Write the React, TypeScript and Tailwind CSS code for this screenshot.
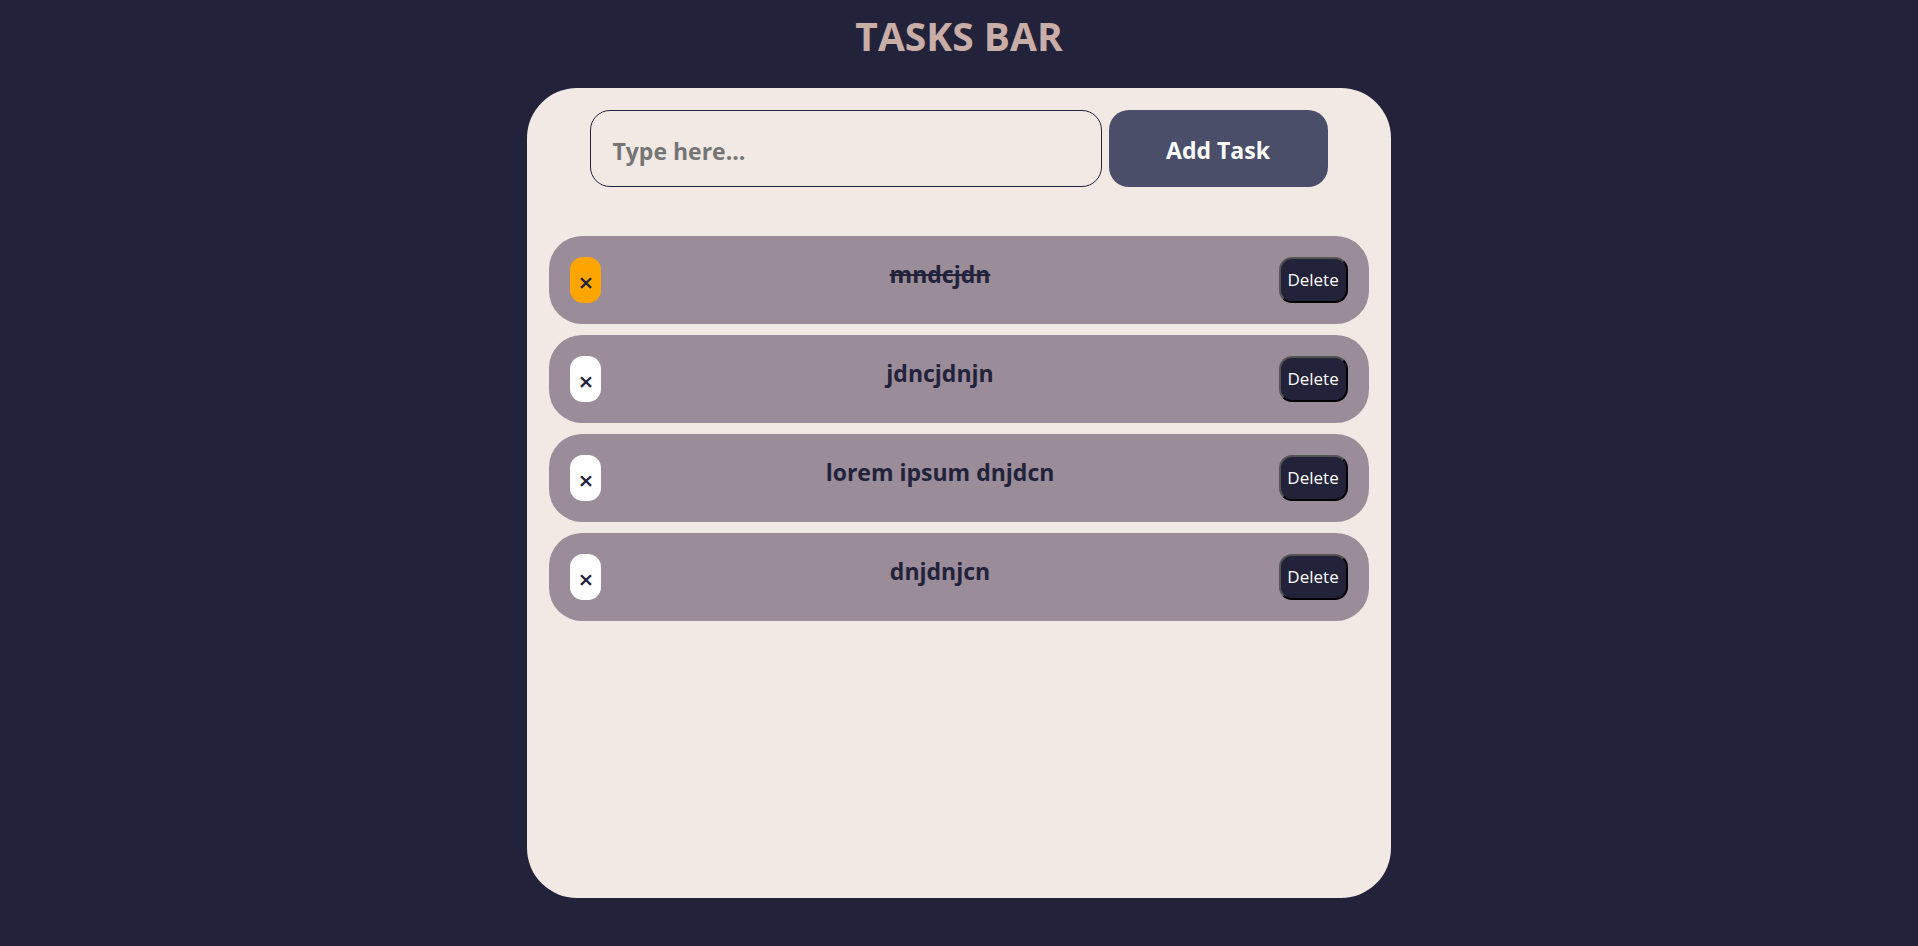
import { useState, type FormEvent } from "react";

type Task = { id: number; text: string; done: boolean };

const initialTasks: Task[] = [
  { id: 1, text: "mndcjdn", done: true },
  { id: 2, text: "jdncjdnjn", done: false },
  { id: 3, text: "lorem ipsum dnjdcn", done: false },
  { id: 4, text: "dnjdnjcn", done: false },
];

function TaskRow({
  task,
  onToggle,
  onDelete,
}: {
  task: Task;
  onToggle: () => void;
  onDelete: () => void;
}) {
  return (
    <li className="flex items-start justify-between rounded-[33px] bg-[#9a8c98] p-[21px]">
      <button
        type="button"
        aria-label={`Toggle ${task.text}`}
        aria-pressed={task.done}
        onClick={onToggle}
        className={`flex h-[46px] w-[31px] items-center justify-center rounded-[13px] pt-1 text-[26px] leading-6 font-semibold ${
          task.done ? "bg-[#ffa500]" : "bg-white"
        }`}
      >
        ×
      </button>
      <p
        className={`text-[23px] leading-[35px] font-bold ${
          task.done ? "line-through" : ""
        }`}
      >
        {task.text}
      </p>
      <button
        type="button"
        onClick={onDelete}
        className="h-[46px] w-[69px] rounded-[13px] border-2 border-black bg-[#22223b] text-[17px] text-white [border-style:outset]"
      >
        Delete
      </button>
    </li>
  );
}

export default function App() {
  const [tasks, setTasks] = useState(initialTasks);
  const [draft, setDraft] = useState("");

  const addTask = (event: FormEvent) => {
    event.preventDefault();
    const text = draft.trim();
    if (!text) return;
    setTasks([...tasks, { id: Date.now(), text, done: false }]);
    setDraft("");
  };

  return (
    <div className="flex min-h-screen flex-col items-center bg-[#22223b] pb-12 font-['Open_Sans','Noto_Sans',sans-serif] text-[#22223b]">
      <h1 className="pt-2 pb-6 text-[39px] leading-[56px] font-bold text-[#c9ada7]">
        TASKS BAR
      </h1>
      <main className="flex w-[45%] min-w-[600px] grow flex-col gap-[49px] rounded-[50px] bg-[#f2e9e4] p-[22px]">
        <form
          onSubmit={addTask}
          className="mx-[41px] grid grid-cols-[7fr_3fr] gap-[7px]"
        >
          <input
            type="text"
            aria-label="New task"
            placeholder="Type here..."
            value={draft}
            onChange={(event) => setDraft(event.target.value)}
            className="h-[77px] min-w-0 rounded-[20px] border border-[#22223b] px-[21px] pt-1 text-[23px] font-bold outline-none placeholder:text-[#757575]"
          />
          <button
            type="submit"
            className="h-[77px] rounded-[20px] bg-[#4a4e69] pt-1 text-[23px] font-bold text-white"
          >
            Add Task
          </button>
        </form>
        <ul className="flex flex-col gap-[11px]">
          {tasks.map((task) => (
            <TaskRow
              key={task.id}
              task={task}
              onToggle={() =>
                setTasks(
                  tasks.map((t) =>
                    t.id === task.id ? { ...t, done: !t.done } : t,
                  ),
                )
              }
              onDelete={() => setTasks(tasks.filter((t) => t.id !== task.id))}
            />
          ))}
        </ul>
      </main>
    </div>
  );
}
